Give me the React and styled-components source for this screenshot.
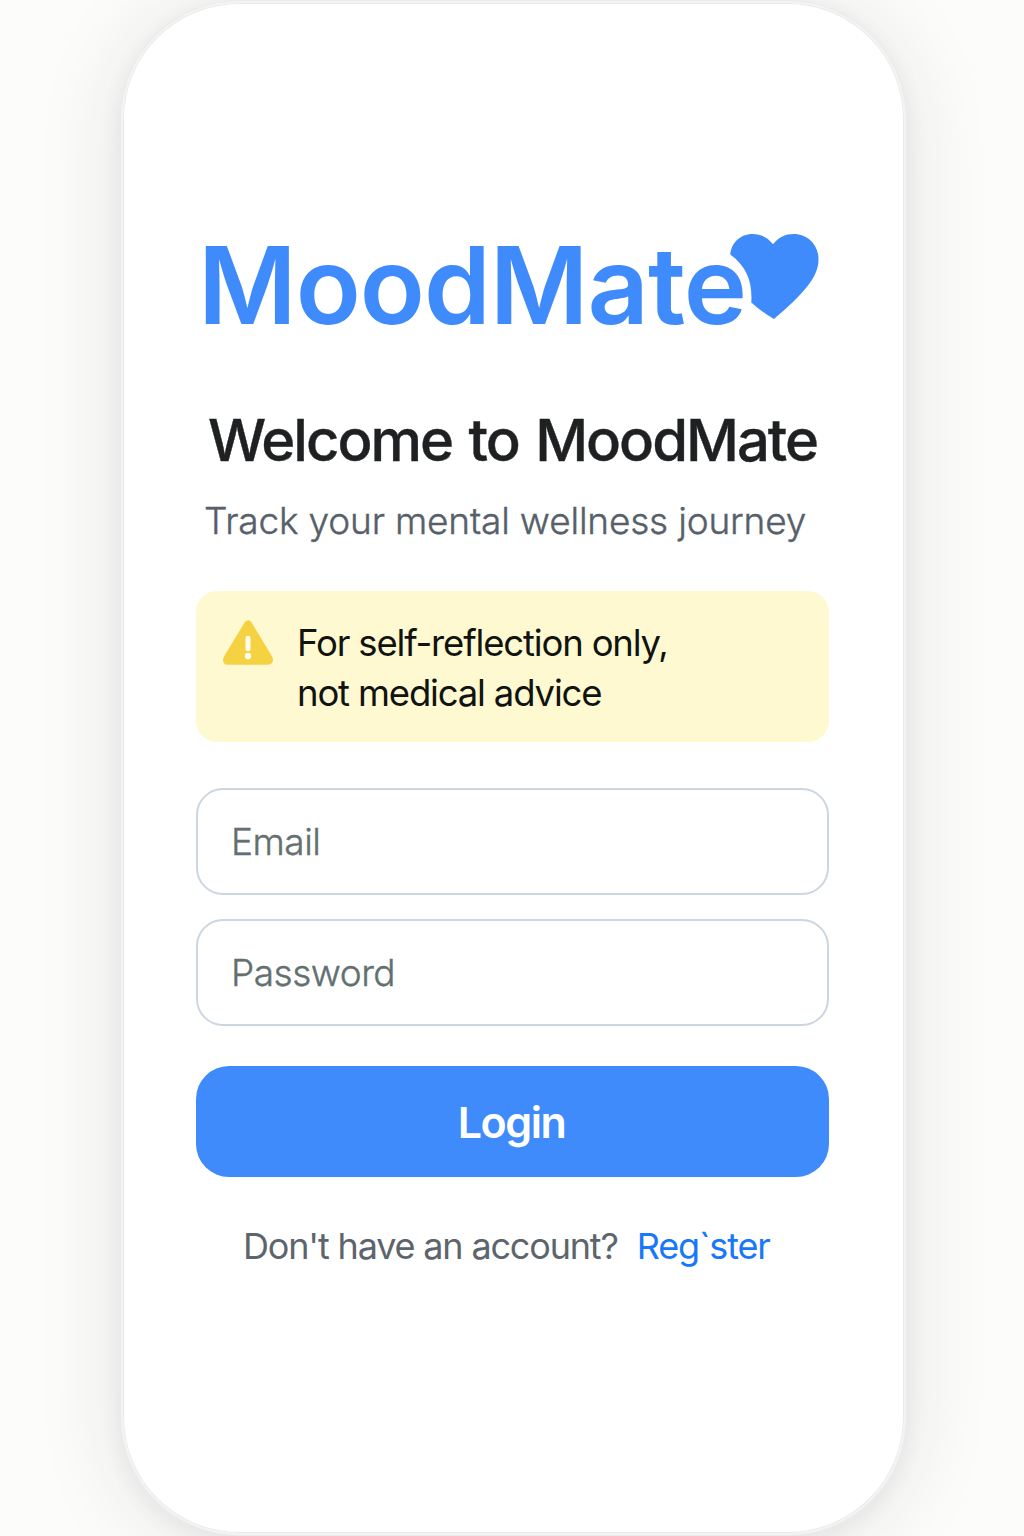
import React from "react";
import styled, { createGlobalStyle } from "styled-components";

const GlobalStyle = createGlobalStyle`
  *, *::before, *::after { box-sizing: border-box; }
  body {
    margin: 0;
    background: #fcfcfa;
    font-family: Inter, "Liberation Sans", sans-serif;
    overflow: hidden;
  }
`;

const Page = styled.main`
  height: 1536px;
  padding: 1px 0 0 121px;
  overflow: hidden;
`;

const Phone = styled.section`
  width: 785px;
  height: 1534px;
  padding: 231px 75px 0 73px;
  border: 2px solid #f3f3f3;
  border-radius: 118px;
  background: #fff;
  box-shadow:
    inset 0 0 0 1px #e9e9e9,
    0 0 0 1px #ebebeb,
    0 6px 24px rgba(40, 40, 50, 0.06),
    0 6px 90px rgba(40, 40, 50, 0.11);
  display: flex;
  flex-direction: column;
  white-space: nowrap;
`;

const Logo = styled.div`
  display: flex;
  height: 110px;
  padding-left: 3px;
  color: #408bfc;
`;

const LogoText = styled.span`
  width: 531px;
  margin-left: -1px;
  margin-right: 1px;
  font-size: 107px;
  font-weight: 600;
  line-height: 102px;
  letter-spacing: -1px;
`;

const HeartIcon = styled.svg`
  flex: none;
  width: 90px;
  height: 88px;
`;

const Title = styled.h1`
  margin: 61px 0 0 12px;
  font-size: 58px;
  font-weight: 500;
  line-height: 70px;
  letter-spacing: -2px;
  word-spacing: 3px;
  color: #1e2022;
  -webkit-text-stroke: 0.4px currentColor;
`;

const Subtitle = styled.p`
  margin: 22px 0 0 8px;
  font-size: 37px;
  font-weight: 300;
  line-height: 48px;
  letter-spacing: -0.18px;
  color: #56606a;
  -webkit-text-stroke: 0.4px currentColor;
`;

const Notice = styled.div`
  display: flex;
  gap: 23px;
  height: 151px;
  margin-top: 46px;
  padding: 27px 26px;
  border-radius: 21px;
  background: #fff9d2;
`;

const WarningIcon = styled.svg`
  flex: none;
  width: 52px;
  height: 48px;
`;

const NoticeText = styled.p`
  margin: 0;
  font-size: 36.5px;
  line-height: 50px;
  letter-spacing: -1.17px;
  color: #101310;
`;

const Form = styled.form`
  display: flex;
  flex-direction: column;
  margin-top: 46px;
`;

const Field = styled.input`
  height: 107px;
  margin-bottom: 24px;
  padding: 0 33px;
  border: 2px solid #cbd6e0;
  border-radius: 27px;
  outline: none;
  background: #fff;
  font-family: inherit;
  font-size: 37px;
  font-weight: 300;
  letter-spacing: -0.5px;
  &::placeholder {
    color: #637070;
    opacity: 1;
    -webkit-text-stroke: 0.4px #637070;
  }
`;

const LoginButton = styled.button`
  height: 111px;
  margin-top: 16px;
  padding: 0 2px 0 0;
  border: 0;
  border-radius: 33px;
  background: #408bfc;
  color: #fff;
  font-family: inherit;
  font-size: 43px;
  font-weight: 600;
  letter-spacing: -1.5px;
`;

const Footer = styled.p`
  display: flex;
  gap: 19px;
  margin: 45px 0 0 47px;
  font-size: 36px;
  font-weight: 400;
  line-height: 48px;
  letter-spacing: -1.17px;
  color: #5d656c;
`;

const RegisterLink = styled.a`
  color: #1877fb;
`;

export default function App() {
  return (
    <>
      <GlobalStyle />
      <Page>
        <Phone>
          <Logo>
            <LogoText>MoodMate</LogoText>
            <HeartIcon viewBox="0 0 90 88" fill="currentColor" aria-hidden="true">
              <path d="M.3 20.600C1 9 10.200 0 22.500 0c8.600 0 15 3.300 20.500 10.300C49 3 55.500 0 63.500 0 78.500 0 88.500 11.500 88.500 25c0 10-4 18-10.500 26.500C69 63 57 74 44 85 36 80.500 28 74.500 21.300 68.500 22.500 48 17 33 .3 20.600Z" />
            </HeartIcon>
          </Logo>
          <Title>Welcome to MoodMate</Title>
          <Subtitle>Track your mental wellness journey</Subtitle>
          <Notice>
            <WarningIcon viewBox="0 0 52 48" aria-hidden="true">
              <path
                d="M22.600 4.500c1.800-3 5.200-3 7 0l20.500 34c2.200 3.900.4 8.200-4.300 8.200H6.200c-4.700 0-6.400-4.300-4.200-8.200Z"
                fill="#f5d241"
              />
              <rect x="23.500" y="18" width="5" height="15" rx="2" fill="#fffdf0" />
              <circle cx="26" cy="38" r="3.200" fill="#fffdf0" />
            </WarningIcon>
            <NoticeText>
              For self-reflection only,
              <br />
              not medical advice
            </NoticeText>
          </Notice>
          <Form>
            <Field type="email" placeholder="Email" />
            <Field type="password" placeholder="Password" />
            <LoginButton type="button">Login</LoginButton>
          </Form>
          <Footer>
            <span>Don't have an account?</span>
            <RegisterLink>Reg`ster</RegisterLink>
          </Footer>
        </Phone>
      </Page>
    </>
  );
}
